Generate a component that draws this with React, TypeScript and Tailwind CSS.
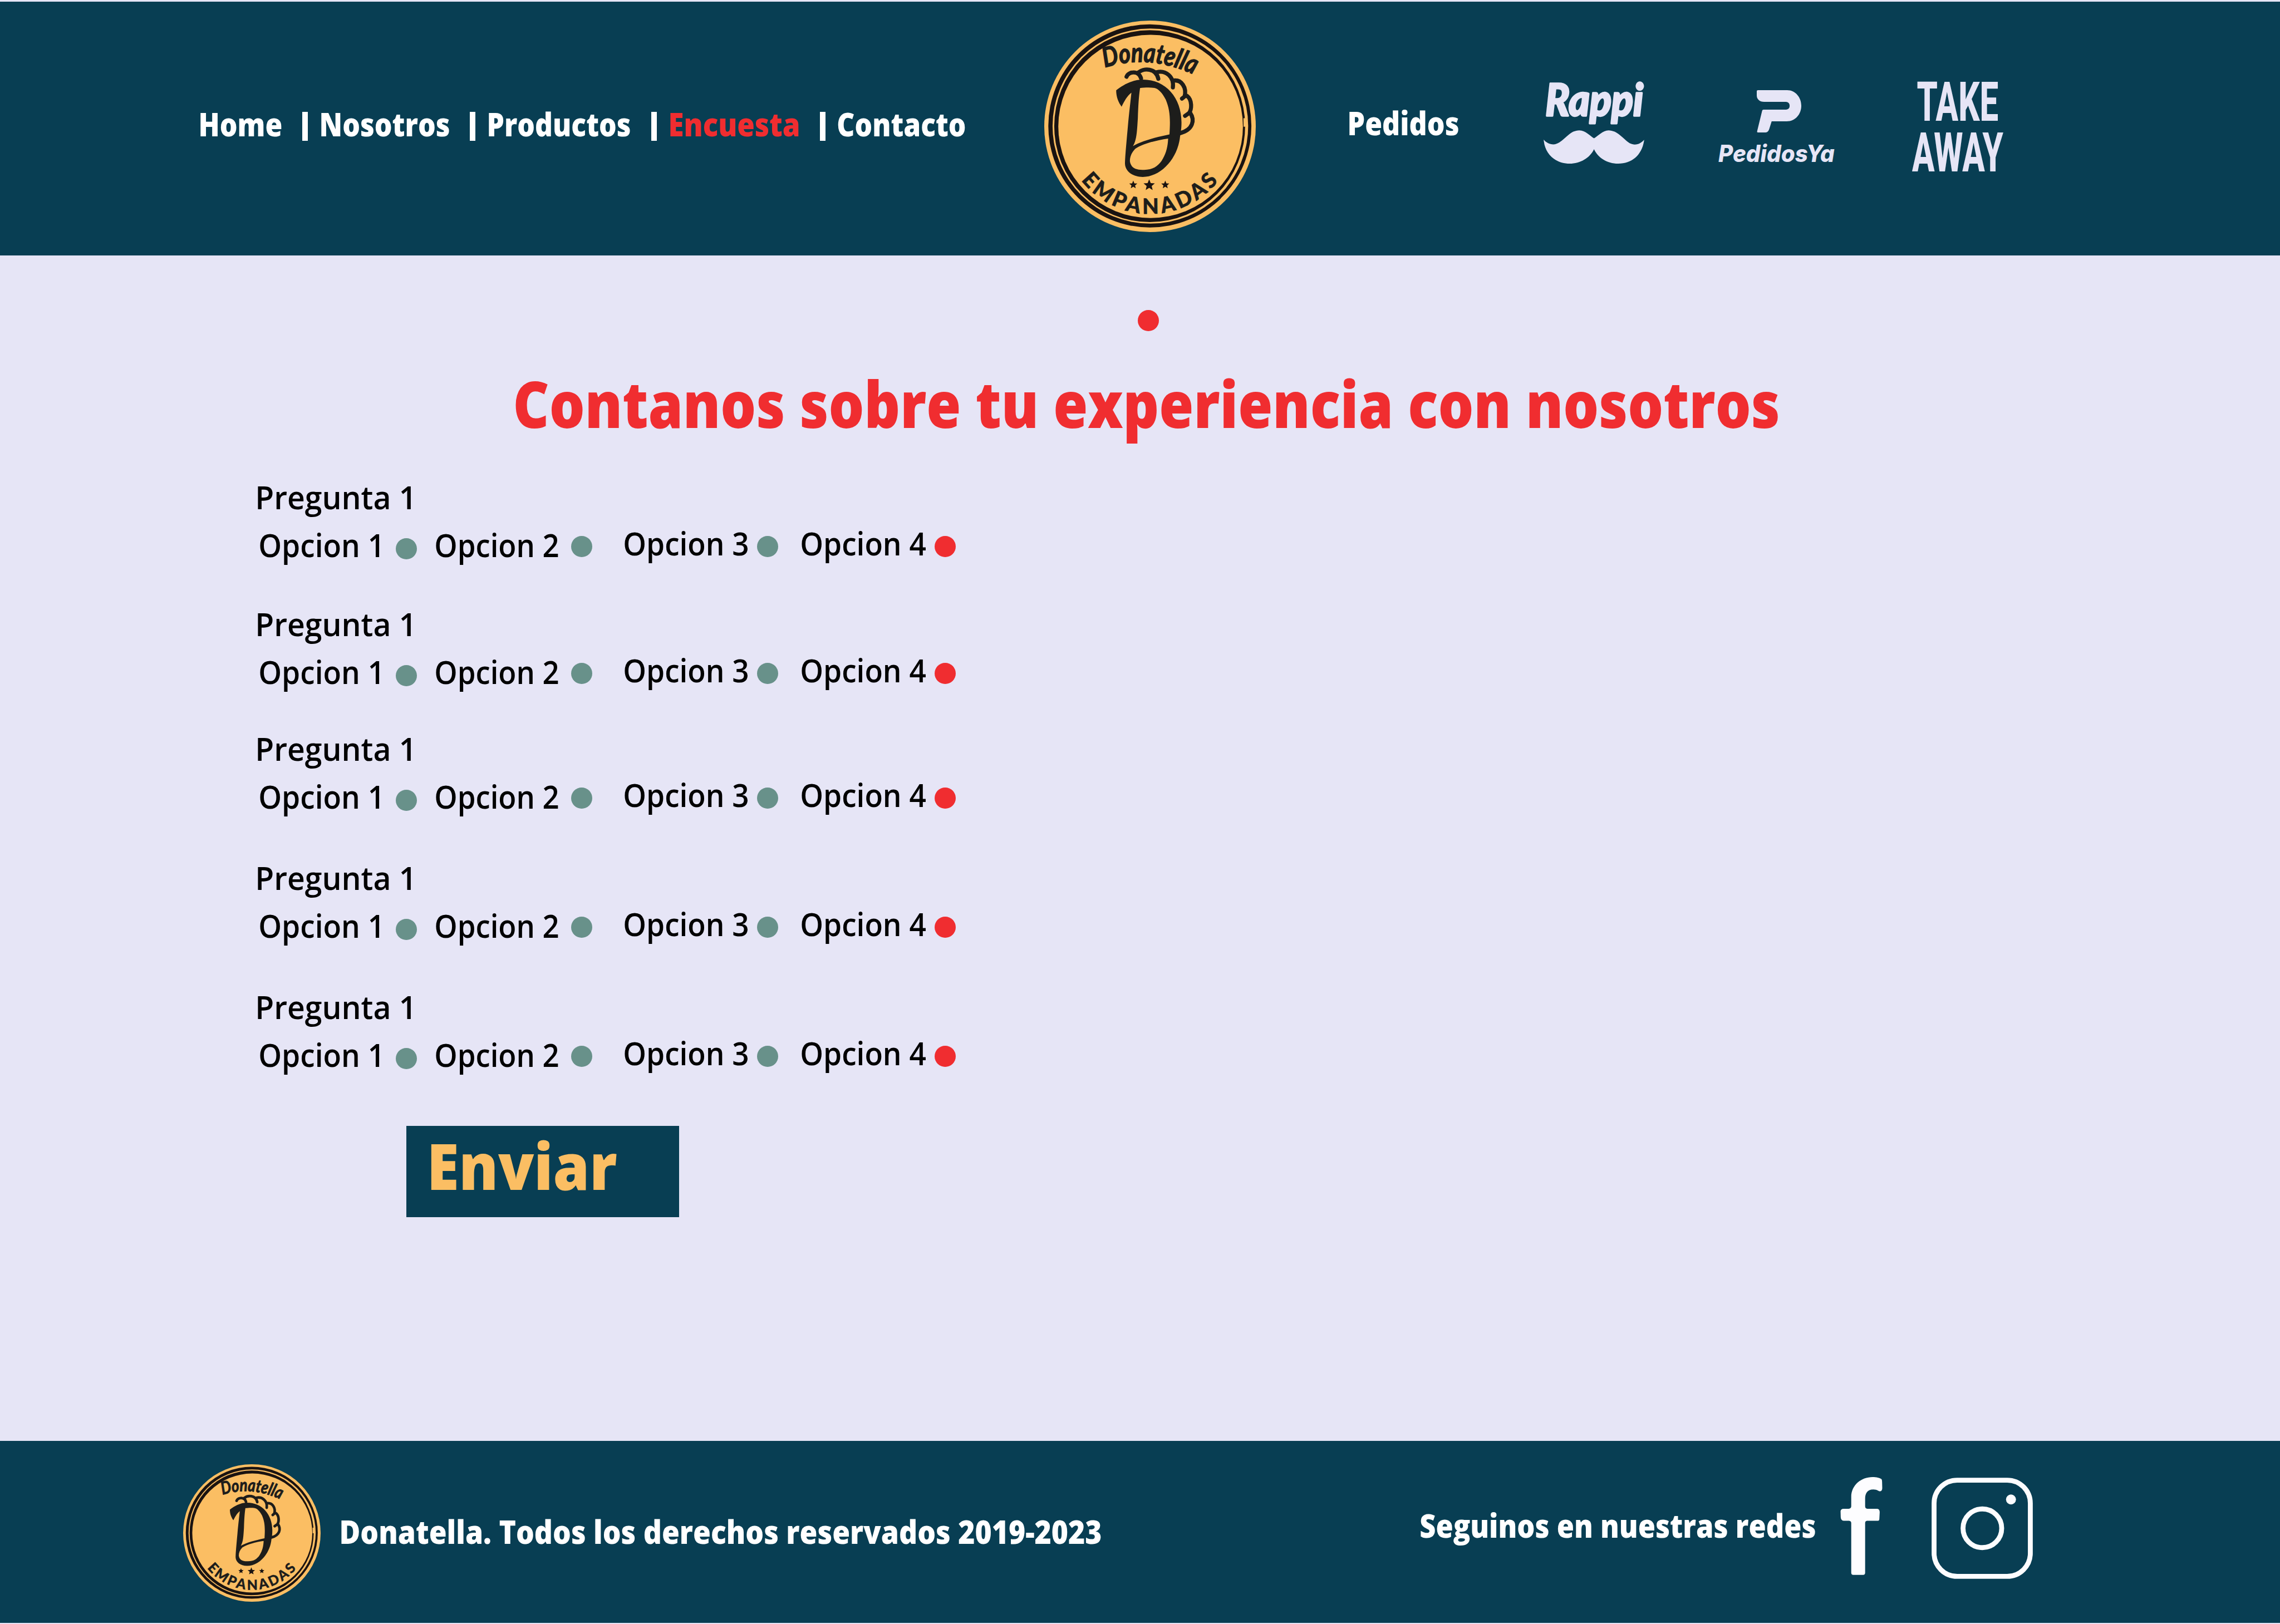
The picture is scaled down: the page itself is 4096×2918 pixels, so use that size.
import { useLayoutEffect, useRef, useState } from "react";
import type { ReactNode } from "react";

type FitProps = { text: string; className: string };

/* One line of text whose ink is stretched to span the width of its box. */
function Fit({ text, className }: FitProps) {
  const box = useRef<HTMLSpanElement>(null);
  const [transform, setTransform] = useState("none");

  useLayoutEffect(() => {
    const el = box.current;
    const ctx = document.createElement("canvas").getContext("2d");
    if (!el || !ctx) return;
    const cs = getComputedStyle(el);
    ctx.font = `${cs.fontStyle} ${cs.fontWeight} ${cs.fontSize} ${cs.fontFamily}`;
    const m = ctx.measureText(text);
    const ink = m.actualBoundingBoxLeft + m.actualBoundingBoxRight;
    const scale = el.clientWidth / ink;
    setTransform(`translateX(${m.actualBoundingBoxLeft * scale}px) scaleX(${scale})`);
  }, [text]);

  return (
    <span ref={box} className={`block shrink-0 whitespace-nowrap ${className}`}>
      <span className="inline-block origin-left" style={{ transform }}>
        {text}
      </span>
    </span>
  );
}

const navText =
  "h-[60px] font-['Open_Sans',sans-serif] text-[57.5px] leading-[60px] font-extrabold";
const bodyText =
  "h-[60px] font-['Open_Sans',sans-serif] text-[57.5px] leading-[60px] font-semibold text-black";
const titleText =
  "h-[120px] font-['Open_Sans',sans-serif] text-[114.5px] leading-[120px] font-extrabold";

function star(cx: number, cy: number, r: number) {
  return Array.from({ length: 10 }, (_, i) => {
    const a = (i * Math.PI) / 5 - Math.PI / 2;
    const d = i % 2 ? r * 0.45 : r;
    return `${cx + d * Math.cos(a)},${cy + d * Math.sin(a)}`;
  }).join(" ");
}

function DonatellaLogo({ id, className }: { id: string; className: string }) {
  return (
    <svg viewBox="82 63 1250 1250" className={className} role="img" aria-label="Donatella Empanadas">
      <circle cx="707" cy="688" r="625" fill="#fbbe63" />
      <circle cx="706" cy="685.5" r="600" fill="#1a1311" />
      <ellipse cx="709" cy="686.5" rx="578" ry="576.5" fill="#fbbe63" />
      <ellipse cx="705" cy="687" rx="564" ry="567" fill="#1a1311" />
      <ellipse cx="710.5" cy="688.5" rx="545.5" ry="541.5" fill="#fbbe63" />
      <path d="M1311 800A605 605 0 0 1 1130 1118" fill="none" stroke="#fbbe63" strokeWidth="14" />
      <path d="M1266 640L1267 690" fill="none" stroke="#fbbe63" strokeWidth="14" />
      <g fill="none" stroke="#1d1d1b" strokeWidth="24" strokeLinecap="round">
        <path d="M568 395C580 362 642 356 654 405" />
        <path d="M636 371C670 342 742 342 756 407" />
        <path d="M746 368C800 354 850 395 842 458" />
        <path d="M842 418C895 408 925 462 911 512L896 524" />
        <path d="M926 508C957 532 955 590 936 611L914 626" />
        <path d="M944 608C974 652 960 708 886 728" />
      </g>
      <path
        fillRule="evenodd"
        fill="#1d1d1b"
        d="M507 475C545 445 600 412 665 412C800 412 893 520 893 665C893 700 889 722 885 745C872 880 770 987 664 987C600 987 560 950 559 908C560 860 568 780 576 690C584 600 592 540 597 489C570 510 555 540 539 572C520 545 507 515 507 475ZM648 462C640 520 638 560 635 640C630 720 628 770 606 805C655 775 745 752 822 736C828 640 825 590 800 530C780 490 755 465 733 461C705 457 670 459 648 462ZM814 760C745 770 665 790 620 820C598 842 588 868 588 893C592 930 620 945 662 945C720 948 752 925 775 893C802 850 812 810 814 760Z"
      />
      <g fill="#1a1311">
        <polygon points={star(608, 1034, 25)} />
        <polygon points={star(702, 1036, 35)} />
        <polygon points={star(797, 1034, 25)} />
      </g>
      <path id={`${id}-top`} d="M440 342Q706 254 985 392" fill="none" />
      <path id={`${id}-bottom`} d="M299.6 1006A517 517 0 0 0 1114.4 1006" fill="none" />
      <text
        fill="#1d1d1b"
        stroke="#1d1d1b"
        strokeWidth="5"
        strokeLinejoin="round"
        fontFamily="Lato, sans-serif"
        fontStyle="italic"
        fontWeight="700"
        fontSize="160"
      >
        <textPath href={`#${id}-top`} textLength="540" lengthAdjust="spacingAndGlyphs">
          Donatella
        </textPath>
      </text>
      <text
        fill="#1d1d1b"
        stroke="#1d1d1b"
        strokeWidth="2"
        fontFamily="Lato, sans-serif"
        fontWeight="900"
        fontSize="126"
      >
        <textPath href={`#${id}-bottom`} textLength="932" lengthAdjust="spacing">
          EMPANADAS
        </textPath>
      </text>
    </svg>
  );
}

function RappiLogo({ className }: { className: string }) {
  return (
    <svg viewBox="66 45 595 488" className={className} role="img" aria-label="Rappi" fill="#e6e5f6">
      <text
        x="76"
        y="248"
        fontFamily="Lato, sans-serif"
        fontStyle="italic"
        fontWeight="900"
        fontSize="262"
        stroke="#e6e5f6"
        strokeWidth="11"
        strokeLinejoin="round"
        textLength="580"
        lengthAdjust="spacingAndGlyphs"
      >
        Rappi
      </text>
      <path d="M66 390C85 415 120 428 150 412C195 390 220 336 277 336C315 336 340 370 364 383C388 370 415 336 450 336C505 336 540 390 575 412C610 430 640 415 661 392C650 480 590 533 507 533C440 533 385 495 364 447C340 500 280 533 220 533C130 533 70 470 66 390Z" />
    </svg>
  );
}

function PedidosYaMark({ className }: { className: string }) {
  return (
    <svg viewBox="240 97 230 250" preserveAspectRatio="none" className={className} fill="#e6e5f6">
      <path d="M246 97H397C440 97 470 140 470 189S440 281 395 281H317L305 325Q300 346 286 347H245Q240 347 242 340L268 218Q269 212 275 212H392Q410 209 410 189T392 166H278C255 166 240 150 240 128V103Q240 97 246 97Z" />
    </svg>
  );
}

function FacebookIcon({ className }: { className: string }) {
  return (
    <svg viewBox="81 63 248 578" className={className} fill="#fdfdff">
      <path d="M145 180C145 110 205 63 270 63C295 63 312 68 322 74Q327 78 327 90L328 128Q328 147 314 147C305 147 300 136 275 136C240 136 227 160 227 190V235Q227 250 240 250H298Q313 252 313 270L311 308Q311 321 303 321H238Q227 322 227 335V628Q227 640 215 640H157Q145 640 145 628V335Q145 322 132 321H100Q84 318 83 300L82 265Q83 250 100 250H130Q145 249 145 235Z" />
    </svg>
  );
}

function InstagramIcon({ className }: { className: string }) {
  return (
    <svg viewBox="620 68 600 600" className={className} fill="none" stroke="#fdfdff" strokeWidth="29">
      <rect x="635" y="83" width="570" height="570" rx="137" />
      <circle cx="921" cy="368" r="114.5" />
      <circle cx="1090.5" cy="197.5" r="29.5" fill="#fdfdff" stroke="none" />
    </svg>
  );
}

function Bar({ className }: { className: string }) {
  return <span className={`mt-[8px] h-[52px] w-[10px] shrink-0 bg-white ${className}`} />;
}

function Dot({ className }: { className: string }) {
  return <span className={`block size-[38px] shrink-0 rounded-full ${className}`} />;
}

function Question({ className }: { className: string }) {
  return (
    <section className={className}>
      <Fit text="Pregunta 1" className={`ml-[463px] w-[275px] ${bodyText}`} />
      <div className="mt-[26px] flex h-[61px] items-start pl-[467px]">
        <Fit text="Opcion 1" className={`w-[214px] ${bodyText}`} />
        <Dot className="mt-[18px] ml-[30px] bg-[#68918a]" />
        <Fit text="Opcion 2" className={`ml-[34px] w-[220px] ${bodyText}`} />
        <Dot className="mt-[14px] ml-[23px] bg-[#68918a]" />
        <Fit text="Opcion 3" className={`-mt-[3px] ml-[58px] w-[222px] ${bodyText}`} />
        <Dot className="mt-[14px] ml-[16px] bg-[#68918a]" />
        <Fit text="Opcion 4" className={`-mt-[3px] ml-[42px] w-[223px] ${bodyText}`} />
        <Dot className="mt-[14px] ml-[16px] bg-[#f02d30]" />
      </div>
    </section>
  );
}

function Shell({ children }: { children: ReactNode }) {
  return (
    <div className="flex h-[2918px] w-[4096px] flex-col overflow-hidden bg-[#e6e5f6] pt-[3px] pb-[2px]">
      {children}
    </div>
  );
}

const questionMargins = ["mt-[78px]", "mt-[81px]", "mt-[77px]", "mt-[85px]", "mt-[85px]"];

export default function App() {
  return (
    <Shell>
      <header className="flex h-[456px] shrink-0 items-start bg-[#083e53]">
        <nav className="mt-[190px] ml-[360px] flex items-start text-white">
          <Fit text="Home" className={`w-[146px] ${navText}`} />
          <Bar className="ml-[37px]" />
          <Fit text="Nosotros" className={`ml-[24px] w-[230px] ${navText}`} />
          <Bar className="ml-[37px]" />
          <Fit text="Productos" className={`ml-[24px] w-[254px] ${navText}`} />
          <Bar className="ml-[38px]" />
          <Fit text="Encuesta" className={`ml-[24px] w-[231px] text-[#f02d30] ${navText}`} />
          <Bar className="ml-[38px]" />
          <Fit text="Contacto" className={`ml-[22px] w-[229px] ${navText}`} />
        </nav>
        <DonatellaLogo id="header-logo" className="mt-[34px] ml-[142px] size-[380px] shrink-0" />
        <Fit text="Pedidos" className={`mt-[188px] ml-[168px] w-[196px] text-white ${navText}`} />
        <RappiLogo className="mt-[143px] ml-[153px] h-[148px] w-[181px] shrink-0 overflow-visible" />
        <div className="mt-[159px] ml-[133px] flex w-[209px] shrink-0 flex-col">
          <PedidosYaMark className="ml-[69px] h-[76px] w-[80px]" />
          <Fit
            text="PedidosYa"
            className="mt-[18px] h-[40px] w-[209px] font-['Inter',sans-serif] text-[42px] leading-[40px] font-extrabold text-[#e6e5f6] italic"
          />
        </div>
        <div className="mt-[136px] ml-[139px] w-[164px] shrink-0 font-['Roboto',sans-serif] text-[97.5px] leading-[91px] font-extrabold text-[#e6e5f6]">
          <Fit text="TAKE" className="ml-[9px] h-[91px] w-[145px]" />
          <Fit text="AWAY" className="h-[91px] w-[164px]" />
        </div>
      </header>

      <main className="flex flex-1 flex-col items-start">
        <Dot className="mt-[98px] ml-[2044px] bg-[#f02d30]" />
        <h1>
          <Fit
            text="Contanos sobre tu experiencia con nosotros"
            className={`mt-[70px] ml-[926px] w-[2268px] text-[#f02d30] ${titleText}`}
          />
        </h1>
        {questionMargins.map((margin, i) => (
          <Question key={i} className={margin} />
        ))}
        <button className="mt-[97px] ml-[730px] flex h-[164px] w-[490px] items-start bg-[#083e53] pt-[11px] pl-[44px] text-left">
          <Fit text="Enviar" className={`w-[334px] text-[#fbbe63] ${titleText}`} />
        </button>
      </main>

      <footer className="flex h-[327px] shrink-0 items-start bg-[#083e53] text-white">
        <DonatellaLogo id="footer-logo" className="mt-[42px] ml-[329px] size-[247px] shrink-0" />
        <Fit
          text="Donatella. Todos los derechos reservados 2019-2023"
          className={`mt-[133px] ml-[37px] w-[1365px] ${navText}`}
        />
        <Fit
          text="Seguinos en nuestras redes"
          className={`mt-[122px] ml-[574px] w-[709px] ${navText}`}
        />
        <FacebookIcon className="mt-[65px] ml-[45px] h-[176px] w-[76px] shrink-0" />
        <InstagramIcon className="mt-[66px] ml-[88px] size-[182px] shrink-0" />
      </footer>
    </Shell>
  );
}
